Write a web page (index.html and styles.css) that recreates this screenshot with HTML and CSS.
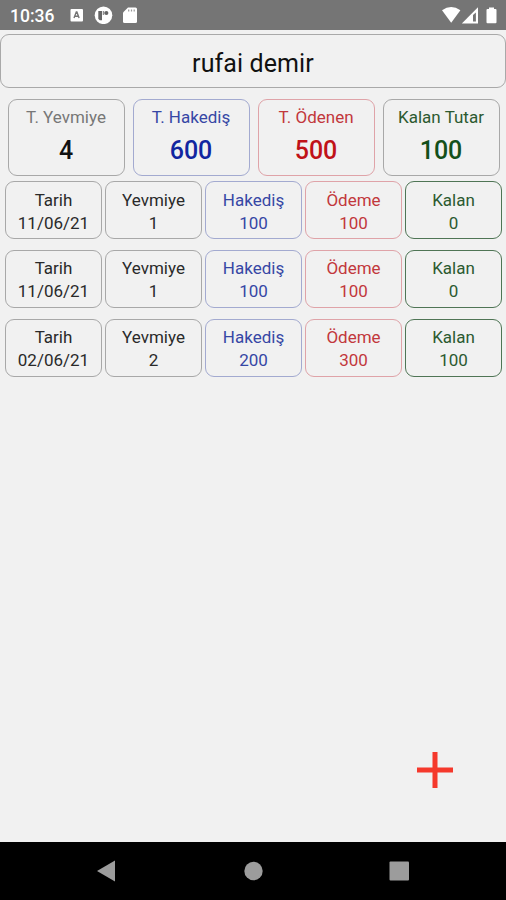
FILE: index.html
```html
<!DOCTYPE html>
<html lang="tr">

<head>
    <meta charset="UTF-8">
    <meta name="viewport" content="width=device-width, initial-scale=1.0">
    <title>rufai demir</title>
    <link rel="stylesheet" href="styles.css">
</head>

<body>
    <div class="status">
        <span class="time">10:36</span>
        <svg class="notice" width="70" height="18" viewBox="0 0 70 18">
            <rect x="1.5" y="3" width="12.5" height="12.5" rx="1" fill="#fff"/>
            <path d="M5 12 7.3 6h.6l2.2 6M6 10.3h3.2" fill="none" stroke="#757575" stroke-width="1.4"/>
            <circle cx="34.5" cy="9.3" r="8.8" fill="#fff"/>
            <path d="M29.3 5h3.7v9.2h-2.3l-1.4-1.4z" fill="#656565"/>
            <circle cx="37.3" cy="7" r="2.1" fill="#656565"/>
            <path d="M34.3 5v4" stroke="#777" stroke-width="1"/>
            <path d="M59 1.5h7.5q1.5 0 1.5 1.5v12.5q0 1.5-1.5 1.5H55.5q-1.5 0-1.5-1.5V6.5z" fill="#fff"/>
            <path d="M59.7 3.5v2M62.5 3.5v2M65.2 3.5v2" stroke="#999" stroke-width="1.2"/>
        </svg>
        <svg class="signal" width="58" height="18" viewBox="0 0 58 18">
            <path d="M1 4.2Q10.2-2.2 19.4 4.2L10.2 16.8z" fill="#fff"/>
            <path d="M37 1.2V17.4H20.8z" fill="#fff"/>
            <path d="M34.9 6.5V15.5H32V9z" fill="#757575"/>
            <path d="M48 1.5h5v1.5h1.5q1 0 1 1V16.2q0 1-1 1h-8q-1 0-1-1V4q0-1 1-1H48z" fill="#fff"/>
        </svg>
    </div>

    <div class="page">
        <h1 class="name">rufai demir</h1>

        <div class="totals">
            <div class="total gray"><p>T. Yevmiye</p><b>4</b></div>
            <div class="total blue"><p>T. Hakediş</p><b>600</b></div>
            <div class="total red"><p>T. Ödenen</p><b>500</b></div>
            <div class="total green"><p>Kalan Tutar</p><b>100</b></div>
        </div>

        <ul class="list">
            <li>
                <div class="cell"><p>Tarih</p><p>11/06/21</p></div>
                <div class="cell"><p>Yevmiye</p><p>1</p></div>
                <div class="cell blue"><p>Hakediş</p><p>100</p></div>
                <div class="cell red"><p>Ödeme</p><p>100</p></div>
                <div class="cell green"><p>Kalan</p><p>0</p></div>
            </li>
            <li>
                <div class="cell"><p>Tarih</p><p>11/06/21</p></div>
                <div class="cell"><p>Yevmiye</p><p>1</p></div>
                <div class="cell blue"><p>Hakediş</p><p>100</p></div>
                <div class="cell red"><p>Ödeme</p><p>100</p></div>
                <div class="cell green"><p>Kalan</p><p>0</p></div>
            </li>
            <li>
                <div class="cell"><p>Tarih</p><p>02/06/21</p></div>
                <div class="cell"><p>Yevmiye</p><p>2</p></div>
                <div class="cell blue"><p>Hakediş</p><p>200</p></div>
                <div class="cell red"><p>Ödeme</p><p>300</p></div>
                <div class="cell green"><p>Kalan</p><p>100</p></div>
            </li>
        </ul>

        <a href="javascript:" class="add">
            <svg width="36" height="36" viewBox="0 0 36 36">
                <path d="M18 0v36M0 18h36" stroke="#f5392c" stroke-width="5"/>
            </svg>
        </a>
    </div>

    <div class="nav">
        <svg width="20" height="22" viewBox="0 0 20 22"><path d="M0 11 18 .5v21z" fill="#9c9c9c"/></svg>
        <svg width="20" height="20" viewBox="0 0 20 20"><circle cx="10.5" cy="10" r="9.2" fill="#9c9c9c"/></svg>
        <svg width="20" height="20" viewBox="0 0 20 20"><rect x=".5" y=".5" width="19.5" height="19" rx="1" fill="#9c9c9c"/></svg>
    </div>
</body>

</html>
```
FILE: styles.css
```css
* {
    margin: 0;
    padding: 0;
    box-sizing: border-box;
}

body {
    height: 900px;
    display: flex;
    flex-direction: column;
    background-color: #f1f1f1;
    font-family: Roboto, "Liberation Sans", sans-serif;
    color: #2a2a2a;
    overflow: hidden;
}

.status {
    height: 30px;
    display: flex;
    align-items: center;
    padding: 0 7px 0 10px;
    background-color: #757575;
    color: #fff;
}

.time {
    width: 59px;
    font-size: 17.5px;
    font-weight: 500;
    padding-top: 1px;
}

.signal {
    margin-left: auto;
}

.page {
    flex: 1;
    display: flex;
    flex-direction: column;
    padding-top: 4px;
}

.name {
    height: 54px;
    border: 1px solid #a9a9a9;
    border-radius: 9px;
    font-size: 25px;
    font-weight: 400;
    line-height: 57px;
    letter-spacing: .1px;
    text-align: center;
    color: #111;
}

.totals {
    display: flex;
    gap: 8px;
    padding: 11px 6.5px 0 7.5px;
}

.total {
    flex: 1;
    height: 77px;
    padding-top: 7px;
    border: 1px solid #a8a8a8;
    border-radius: 9px;
    text-align: center;
}

.total p {
    font-size: 17px;
    line-height: 20px;
}

.total b {
    display: block;
    font-size: 25px;
    font-weight: 500;
    line-height: 28px;
    padding-top: 10px;
}

.list {
    list-style: none;
    display: flex;
    flex-direction: column;
    gap: 10.6px;
    padding: 5.4px 4px 0 5px;
}

.list li {
    display: flex;
    gap: 3px;
}

.cell {
    flex: 1;
    height: 58px;
    padding-top: 6.4px;
    border: 1px solid #a8a8a8;
    border-radius: 9px;
    font-size: 17px;
    line-height: 23px;
    text-align: center;
}

/* 颜色 */
.gray p {
    color: #777;
}

.gray b {
    color: #111;
}

.blue {
    border-color: #a3aad0;
    color: #3647a5;
}

.blue b {
    color: #1226a0;
}

.red {
    border-color: #dfa3a8;
    color: #c2383c;
}

.red b {
    color: #c01218;
}

.green {
    color: #2c5a30;
}

.green b {
    color: #14501a;
}

.cell.green {
    border-color: #4f7555;
}

.add {
    margin: auto 53px 54px auto;
    line-height: 0;
}

.nav {
    height: 58px;
    display: flex;
    justify-content: space-between;
    align-items: center;
    padding: 0 97px;
    background-color: #000;
}
```
